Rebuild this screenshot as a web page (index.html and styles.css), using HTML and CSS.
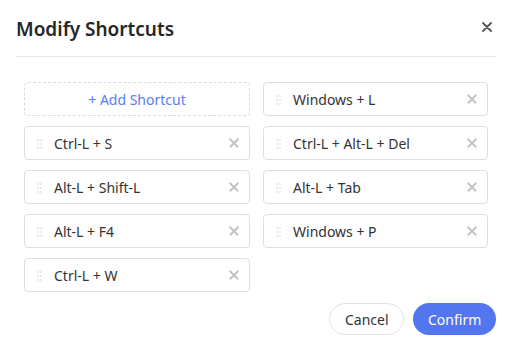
FILE: index.html
```html
<!DOCTYPE html>
<html>
<head>
<meta charset="utf-8">
<link rel="stylesheet" href="styles.css">
</head>
<body>
<div class="dialog">
  <div class="header">
    <h1 class="title">Modify Shortcuts</h1>
    <button class="close" aria-label="Close">
      <svg width="10" height="10" viewBox="0 0 10 10"><path d="M1 1L9 9M9 1L1 9" stroke="#555" stroke-width="1.8" stroke-linecap="round"/></svg>
    </button>
  </div>
  <div class="grid">
    <div class="add">+ Add Shortcut</div>
    <div class="item"><span class="handle"></span><span class="label">Windows + L</span><span class="x"></span></div>
    <div class="item"><span class="handle"></span><span class="label">Ctrl-L + S</span><span class="x"></span></div>
    <div class="item"><span class="handle"></span><span class="label">Ctrl-L + Alt-L + Del</span><span class="x"></span></div>
    <div class="item"><span class="handle"></span><span class="label">Alt-L + Shift-L</span><span class="x"></span></div>
    <div class="item"><span class="handle"></span><span class="label">Alt-L + Tab</span><span class="x"></span></div>
    <div class="item"><span class="handle"></span><span class="label">Alt-L + F4</span><span class="x"></span></div>
    <div class="item"><span class="handle"></span><span class="label">Windows + P</span><span class="x"></span></div>
    <div class="item"><span class="handle"></span><span class="label">Ctrl-L + W</span><span class="x"></span></div>
  </div>
  <div class="footer">
    <button class="btn cancel">Cancel</button>
    <button class="btn confirm">Confirm</button>
  </div>
</div>
</body>
</html>
```
FILE: styles.css
```css
* { box-sizing: border-box; }
html, body { margin: 0; padding: 0; background: #fff; }
body { font-family: "Noto Sans", "Open Sans", sans-serif; color: #2b2b2b; }
.dialog { width: 510px; height: 351px; padding: 0 14px 0 16px; }
.header {
  display: flex; align-items: center; justify-content: space-between;
  height: 57px; border-bottom: 1px solid #e6e6e6;
}
.title { margin: 0; font-size: 19px; font-weight: 600; color: #262626; padding-top: 2px; }
.close {
  border: 0; background: none; padding: 0; width: 12px; height: 12px;
  display: flex; align-items: center; justify-content: center; margin-right: 3px; margin-bottom: 2px;
}
.grid {
  display: grid; grid-template-columns: 226px 225px; column-gap: 13px; row-gap: 10px;
  margin: 25px 0 0 8px;
}
.add, .item { height: 34px; border-radius: 4px; font-size: 14px; }
.add {
  border: 1px dashed #dcdcdc; color: #5b7cf0;
  display: flex; align-items: center; justify-content: center;
}
.item {
  border: 1px solid #dedede; display: flex; align-items: center; padding: 0 10px 0 12px;
  color: #333;
}
.handle {
  width: 5px; height: 11px; margin-right: 12px;
  background-image: radial-gradient(circle, #d4d4d4 0.9px, transparent 1.1px);
  background-size: 3px 4px; background-position: -0.5px 0;
}
.label { flex: 1; }
.x { width: 10px; height: 10px; position: relative; }
.x::before, .x::after {
  content: ""; position: absolute; left: -1px; top: 4px; width: 12px; height: 1.6px; background: #c4c4c4;
  transform: rotate(45deg);
}
.x::after { transform: rotate(-45deg); }
.footer { display: flex; justify-content: flex-end; gap: 9px; margin-top: 11px; }
.btn {
  height: 32px; border-radius: 16px; font-family: inherit; font-size: 14px; padding: 0 15px;
}
.cancel { border: 1px solid #e3e3e3; background: #fff; color: #333; width: 75px; margin-left: 1px; }
.confirm { border: 0; background: #5376ef; color: #fff; width: 83px; }
```
